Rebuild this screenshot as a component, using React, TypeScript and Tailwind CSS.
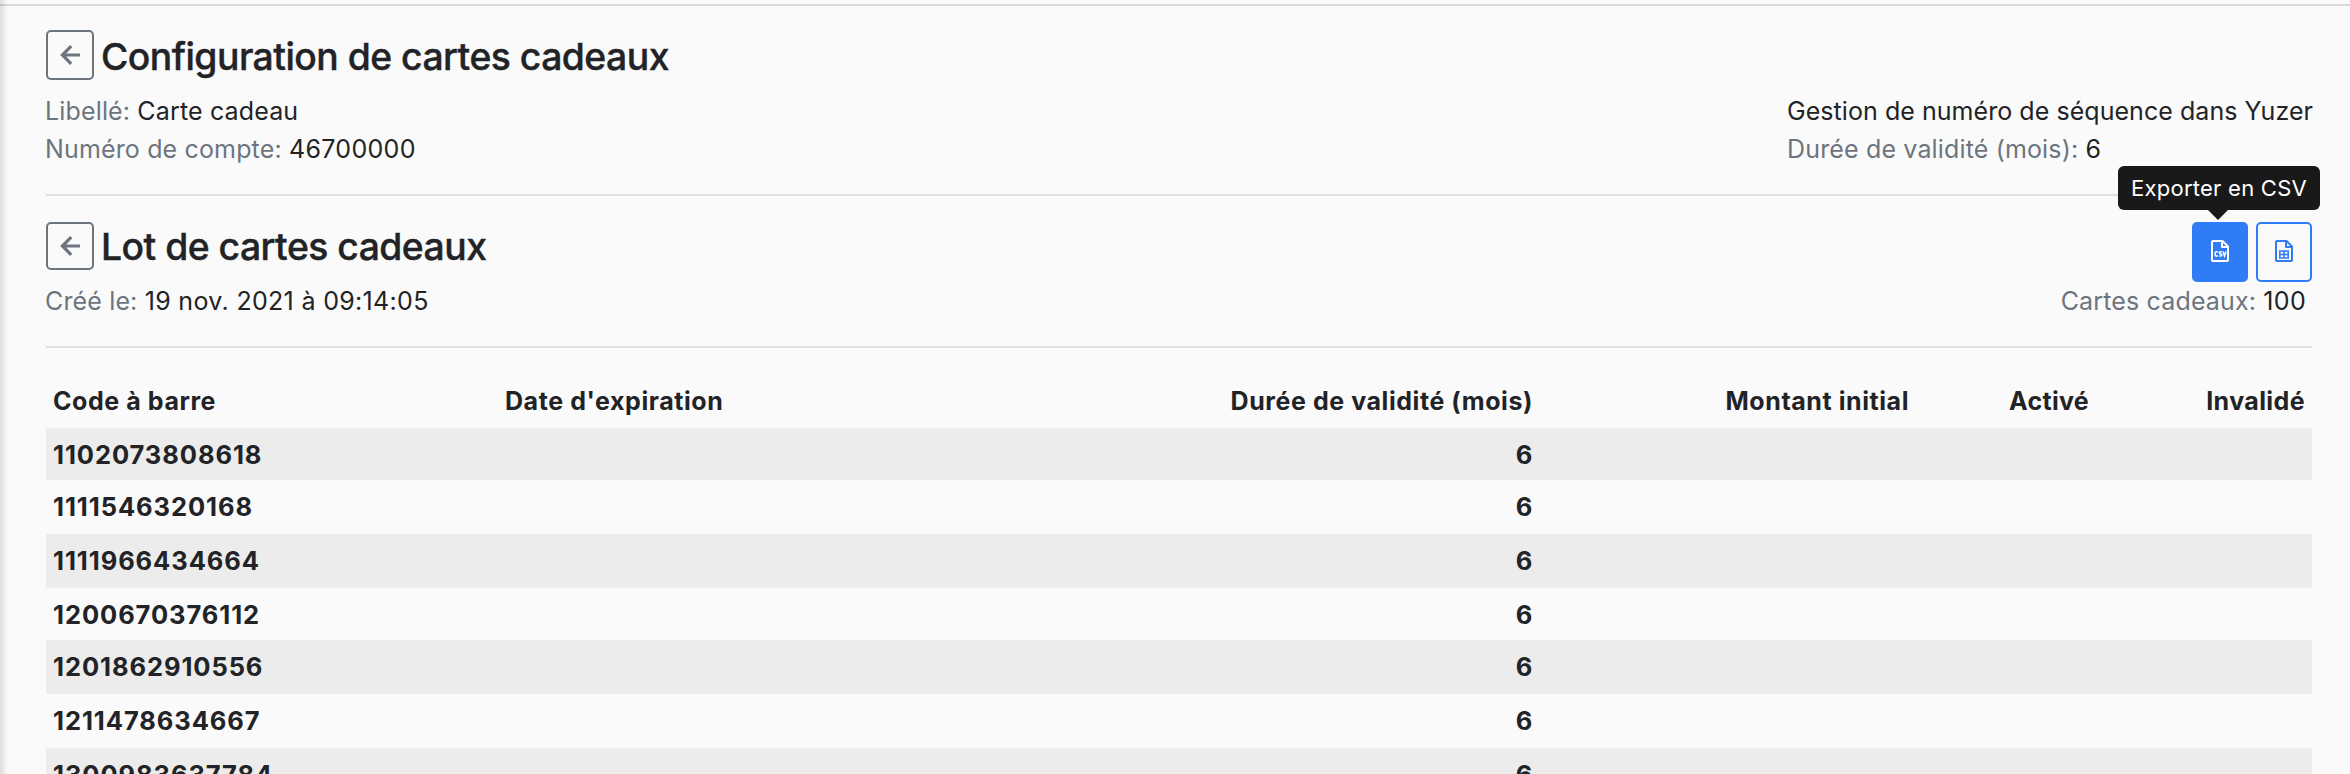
import React from "react";

const codes = [
  "1102073808618",
  "1111546320168",
  "1111966434664",
  "1200670376112",
  "1201862910556",
  "1211478634667",
  "1300983637784",
];

function BackButton({ tall }: { tall?: boolean }) {
  return (
    <button
      className={`${tall ? "h-[50px]" : "h-12"} flex w-12 shrink-0 items-center justify-center rounded-[5px] border-2 border-[#6c757d] text-[#6c757d]`}
      aria-label="Retour"
    >
      <svg width="22" height="22" viewBox="0 0 22 22" fill="none" stroke="currentColor" strokeWidth="3.2">
        <path d="M21 11H3M12.2 2.2L3.4 11l8.8 8.8" />
      </svg>
    </button>
  );
}

function Muted({ children }: { children: React.ReactNode }) {
  return <span className="tracking-[0.15px] text-[#6c757d]">{children}</span>;
}

function Value({ children }: { children: React.ReactNode }) {
  return <span className="tracking-[0.32px]">{children}</span>;
}

function CsvIcon() {
  return (
    <svg width="18" height="22" viewBox="0 0 18 22" fill="none" stroke="currentColor">
      <path strokeWidth="2" strokeLinejoin="round" d="M2 1h9.5L17 6.5V20a1 1 0 0 1-1 1H2a1 1 0 0 1-1-1V2a1 1 0 0 1 1-1zM11 1v6h6" />
      <path strokeWidth="1.5" d="M7 11.800H5.200a1 1 0 0 0-1 1v2.200a1 1 0 0 0 1 1H7M10.800 11.800H9.400a1 1 0 0 0 0 2.100h.4a1 1 0 0 1 0 2.100H8.200M12 11.500l1.500 4.500 1.500-4.500" />
    </svg>
  );
}

function TableIcon() {
  return (
    <svg width="18" height="22" viewBox="0 0 18 22" fill="none" stroke="currentColor" strokeWidth="2">
      <path strokeLinejoin="round" d="M2 1h9.5L17 6.5V20a1 1 0 0 1-1 1H2a1 1 0 0 1-1-1V2a1 1 0 0 1 1-1zM11 1v6h6" />
      <path strokeWidth="1.600" d="M4.800 11h8.400v7H4.800zM9 11v7M4.800 14.500h8.400" />
    </svg>
  );
}

export default function App() {
  return (
    <div className="relative h-[774px] w-[2350px] overflow-hidden bg-[#fafafa] font-['Inter',sans-serif] text-[25px] leading-[38px] text-[#222326]">
      <div className="h-1" />
      <div className="h-0.5 bg-[#d5d8dd]" />
      <div className="absolute inset-y-0 left-0 w-2 bg-gradient-to-r from-black/12 to-transparent" />
      <main className="mr-[38px] ml-[46px]">
        <header className="h-[188px] pt-6">
          <div className="flex h-[50px] gap-[7px]">
            <BackButton tall />
            <h1 className="pt-1 text-[37.3px] leading-[45px] font-medium tracking-[-0.52px] [-webkit-text-stroke:0.4px_#222326]">
              Configuration de cartes cadeaux
            </h1>
          </div>
          <div className="flex justify-between pt-3">
            <div className="-ml-px">
              <p><Muted>Libellé: </Muted><span className="tracking-[0.15px]">Carte cadeau</span></p>
              <p><Muted>Numéro de compte: </Muted><Value>46700000</Value></p>
            </div>
            <div className="-mr-px">
              <p className="tracking-[0.05px]">Gestion de numéro de séquence dans Yuzer</p>
              <p><Muted>Durée de validité (mois): </Muted>6</p>
            </div>
          </div>
        </header>
        <div className="h-0.5 bg-[#e0e0e0]" />
        <header className="flex h-[150px] justify-between pt-[26px]">
          <div>
            <div className="flex h-12 gap-[7px]">
              <BackButton />
              <h2 className="pt-0.5 text-[37.3px] leading-[45px] font-medium tracking-[-0.52px] [-webkit-text-stroke:0.4px_#222326]">
                Lot de cartes cadeaux
              </h2>
            </div>
            <p className="-ml-px pt-3"><Muted>Créé le: </Muted><Value>19 nov. 2021 à 09:14:05</Value></p>
          </div>
          <div className="flex flex-col items-end">
            <div className="flex gap-2">
              <button className="relative flex h-[60px] w-14 items-center justify-center rounded-[5px] bg-[#307cf6] pb-0.5 text-white" aria-label="Exporter en CSV">
                <CsvIcon />
                <div className="absolute -top-14 -left-[74px] flex h-11 w-[202px] items-center justify-center rounded-[6px] bg-[#191919] text-[22px] tracking-[0.25px] whitespace-nowrap text-white">
                  Exporter en CSV
                  <svg className="absolute top-11 left-[90px]" width="20" height="10" viewBox="0 0 20 10">
                    <path d="M0 0h20L10 10z" fill="#191919" />
                  </svg>
                </div>
              </button>
              <button className="flex h-[60px] w-14 items-center justify-center rounded-[5px] border-2 border-[#307cf6] pb-0.5 text-[#307cf6]" aria-label="Exporter en tableur">
                <TableIcon />
              </button>
            </div>
            <p className="pr-[6px]"><Muted>Cartes cadeaux: </Muted><Value>100</Value></p>
          </div>
        </header>
        <div className="h-0.5 bg-[#e0e0e0]" />
        <table className="mt-[27px] w-full table-fixed border-collapse text-right font-bold tracking-[0.57px]">
          <colgroup>
            <col className="w-[451px]" />
            <col className="w-[451px]" />
            <col className="w-[592px]" />
            <col className="w-[376px]" />
            <col className="w-[180px]" />
            <col />
          </colgroup>
          <thead>
            <tr className="h-[53px]">
              <th className="px-[7px] pt-[7px] pb-0 text-left align-top">Code à barre</th>
              <th className="px-2 pt-[7px] pb-0 text-left align-top">Date d'expiration</th>
              <th className="px-[7px] pt-[7px] pb-0 align-top">Durée de validité (mois)</th>
              <th className="px-[7px] pt-[7px] pb-0 align-top">Montant initial</th>
              <th className="px-[7px] pt-[7px] pb-0 align-top tracking-[0.3px]">Activé</th>
              <th className="px-[7px] pt-[7px] pb-0 align-top tracking-[0.4px]">Invalidé</th>
            </tr>
          </thead>
          <tbody>
            {codes.map((code, i) => (
              <tr key={code} className={`${i % 3 === 0 ? "h-[52px]" : "h-[54px]"} odd:bg-[#ececec]`}>
                <td className="px-[7px] pt-2 pb-0 text-left align-top text-[25.5px] tracking-[0.92px]">{code}</td>
                <td />
                <td className="px-[7px] pt-2 pb-0 align-top text-[25.5px]">6</td>
                <td />
                <td />
                <td />
              </tr>
            ))}
          </tbody>
        </table>
      </main>
    </div>
  );
}
